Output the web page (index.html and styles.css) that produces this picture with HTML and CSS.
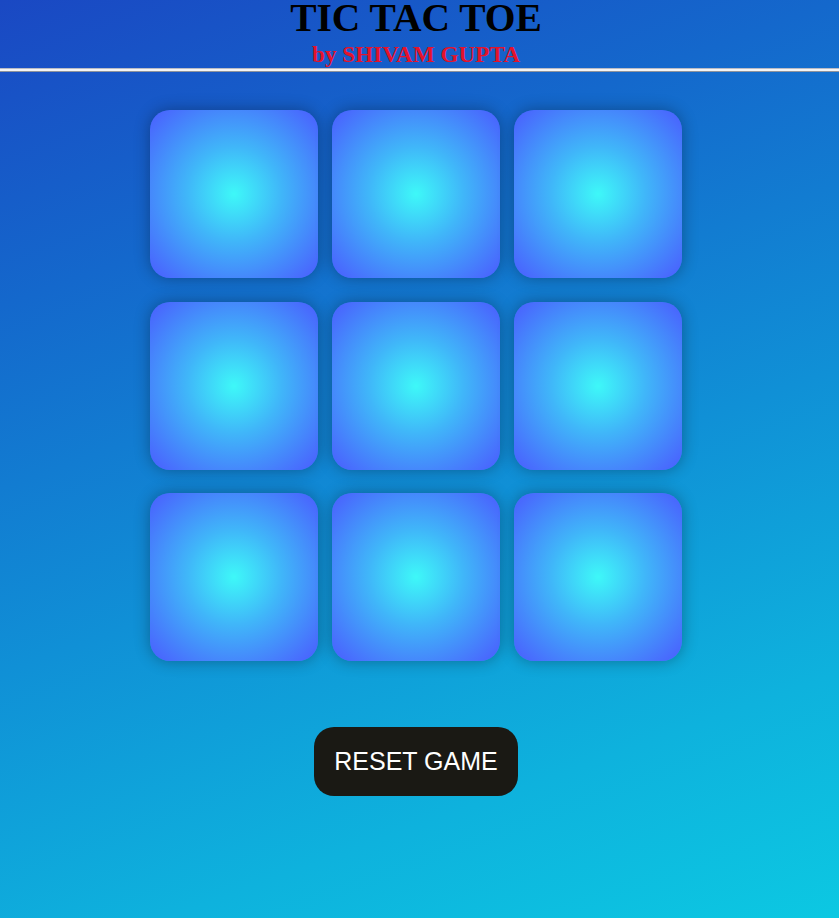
FILE: index.html
```html
<!DOCTYPE html>
<html lang="en">
<head>
<meta charset="utf-8">
<title>Tic Tac Toe</title>
<link rel="stylesheet" href="styles.css">
</head>
<body>
  <div class="page">
    <header class="header">
      <h1 class="title">TIC TAC TOE</h1>
      <h2 class="subtitle">by SHIVAM GUPTA</h2>
    </header>
    <hr class="rule">
    <main class="main">
      <div class="board">
        <button class="box"></button>
        <button class="box"></button>
        <button class="box"></button>
        <button class="box"></button>
        <button class="box"></button>
        <button class="box"></button>
        <button class="box"></button>
        <button class="box"></button>
        <button class="box"></button>
      </div>
      <button class="reset">RESET GAME</button>
    </main>
  </div>
</body>
</html>
```
FILE: styles.css
```css
html, body {
  margin: 0;
  padding: 0;
  height: 100%;
}

body {
  background: linear-gradient(160deg, #1a48c3 0%, #1468cc 25%, #1090d6 55%, #0eb2dd 80%, #0cc8e2 100%);
  font-family: "Liberation Serif", "Times New Roman", serif;
  overflow: hidden;
}

.page {
  display: flex;
  flex-direction: column;
  height: 100%;
}

.header {
  width: 832px;
  height: 68px;
  display: flex;
  flex-direction: column;
  align-items: center;
}

.title {
  margin: 0;
  font-size: 39.5px;
  line-height: 36px;
  font-weight: bold;
  color: #000;
}

.subtitle {
  margin: 5px 0 0;
  font-size: 23.2px;
  line-height: 26px;
  font-weight: bold;
  color: #e3132c;
}

.rule {
  margin: 0;
  height: 2px;
  border: none;
  border-top: 1px solid #b9bcc6;
  border-bottom: 1px solid #8e939c;
  background: #f4f4f4;
}

.main {
  width: 832px;
  display: flex;
  flex-direction: column;
  align-items: center;
  padding-top: 38px;
}

.board {
  display: grid;
  grid-template-columns: repeat(3, 168px);
  grid-auto-rows: 168px;
  column-gap: 14px;
  row-gap: 23.5px;
}

.box {
  border: none;
  padding: 0;
  border-radius: 20px;
  background: radial-gradient(circle at center, #3ef8f8 0%, #40b6f9 40%, #4a5cfe 100%);
  box-shadow: 0 0 16px rgba(0, 0, 0, 0.32);
}

.reset {
  margin-top: 66px;
  width: 204px;
  height: 69px;
  border: none;
  border-radius: 20px;
  background: #1a1914;
  color: #fff;
  font-family: "Liberation Sans", Arial, sans-serif;
  font-size: 25px;
  padding: 0;
}
```
